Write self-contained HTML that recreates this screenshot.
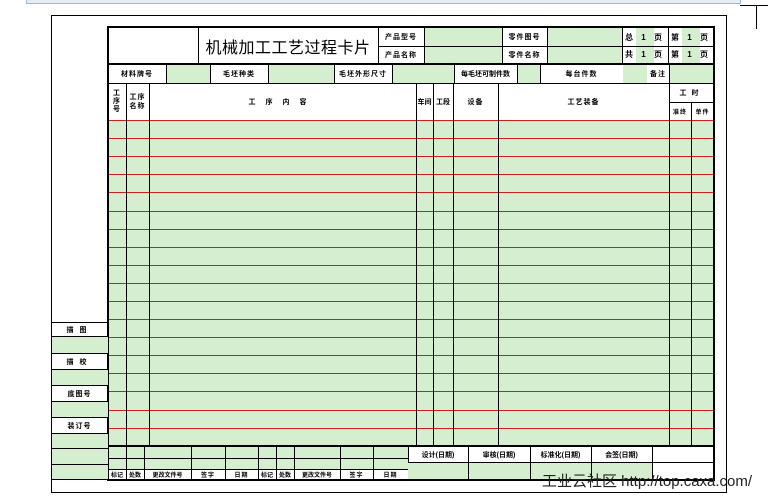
<!DOCTYPE html>
<html><head><meta charset="utf-8"><style>
*{margin:0;padding:0;box-sizing:border-box}
body{width:768px;height:496px;background:#fff;position:relative;overflow:hidden;font-family:"Liberation Sans","Noto Sans CJK SC",sans-serif;color:#000}
.a{position:absolute}
.g{background:#d6eed0}
.t{position:absolute;font-size:7px;font-weight:bold;display:flex;align-items:center;justify-content:center;white-space:nowrap;letter-spacing:1px}
.hl{position:absolute;height:1px;background:#000}
.vl{position:absolute;width:1px;background:#000}
.r{position:absolute;left:108px;width:606px;height:1px;background:#cc2020}
.lb{position:absolute;left:51px;width:57px;border:1px solid #000;background:#fff}
</style></head><body>
<div class="a" style="left:26px;top:0;width:715px;height:4px;background:#e4ecf6;border:1px solid #aab8cc;border-top:none"></div>
<div class="a" style="left:51px;top:15px;width:676px;height:478px;border:1px solid #000"></div>
<div class="a" style="left:740px;top:5px;width:28px;height:1px;background:#000"></div>
<div class="a" style="left:756px;top:5px;width:1px;height:24px;background:#000"></div>

<!-- header row 1-2 -->
<div class="a g" style="left:424px;top:28px;width:78px;height:35px"></div>
<div class="a g" style="left:547px;top:28px;width:75px;height:35px"></div>
<div class="a g" style="left:636px;top:28px;width:18px;height:35px"></div>
<div class="a g" style="left:682px;top:28px;width:18px;height:35px"></div>
<div class="vl" style="left:198px;top:27px;height:36px"></div>
<div class="vl" style="left:378px;top:27px;height:36px"></div>
<div class="vl" style="left:424px;top:27px;height:36px"></div>
<div class="vl" style="left:502px;top:27px;height:36px"></div>
<div class="vl" style="left:547px;top:27px;height:36px"></div>
<div class="vl" style="left:622px;top:27px;height:36px"></div>
<div class="vl" style="left:668px;top:27px;height:36px"></div>
<div class="hl" style="left:378px;top:46px;width:336px"></div>
<div class="a" style="left:108px;top:63px;width:606px;height:2px;background:#000"></div>
<div class="t" style="left:198px;top:28px;width:180px;height:35px;font-size:16px;font-weight:normal;letter-spacing:0.5px">机械加工工艺过程卡片</div>
<div class="t" style="left:378px;top:28px;width:46px;height:18px">产品型号</div>
<div class="t" style="left:378px;top:46px;width:46px;height:17px">产品名称</div>
<div class="t" style="left:502px;top:28px;width:45px;height:18px">零件图号</div>
<div class="t" style="left:502px;top:46px;width:45px;height:17px">零件名称</div>
<div class="t" style="left:622px;top:28px;width:46px;height:18px;font-size:8px;letter-spacing:3px">总 1 页</div>
<div class="t" style="left:622px;top:46px;width:46px;height:17px;font-size:8px;letter-spacing:3px">共 1 页</div>
<div class="t" style="left:668px;top:28px;width:46px;height:18px;font-size:8px;letter-spacing:3px">第 1 页</div>
<div class="t" style="left:668px;top:46px;width:46px;height:17px;font-size:8px;letter-spacing:3px">第 1 页</div>

<!-- row 3 -->
<div class="a g" style="left:166px;top:65px;width:44px;height:18px"></div>
<div class="a g" style="left:268px;top:65px;width:66px;height:18px"></div>
<div class="a g" style="left:392px;top:65px;width:62px;height:18px"></div>
<div class="a g" style="left:517px;top:65px;width:23px;height:18px"></div>
<div class="a g" style="left:623px;top:65px;width:24px;height:18px"></div>
<div class="a g" style="left:669px;top:65px;width:45px;height:18px"></div>
<div class="vl" style="left:166px;top:65px;height:18px"></div>
<div class="vl" style="left:210px;top:65px;height:18px"></div>
<div class="vl" style="left:268px;top:65px;height:18px"></div>
<div class="vl" style="left:334px;top:65px;height:18px"></div>
<div class="vl" style="left:392px;top:65px;height:18px"></div>
<div class="vl" style="left:454px;top:65px;height:18px"></div>
<div class="vl" style="left:517px;top:65px;height:18px"></div>
<div class="vl" style="left:540px;top:65px;height:18px"></div>
<div class="vl" style="left:669px;top:65px;height:18px"></div>
<div class="t" style="left:108px;top:65px;width:58px;height:18px">材料牌号</div>
<div class="t" style="left:210px;top:65px;width:58px;height:18px">毛坯种类</div>
<div class="t" style="left:334px;top:65px;width:58px;height:18px">毛坯外形尺寸</div>
<div class="t" style="left:454px;top:65px;width:63px;height:18px;letter-spacing:0">每毛坯可制件数</div>
<div class="t" style="left:540px;top:65px;width:83px;height:18px">每台件数</div>
<div class="t" style="left:647px;top:65px;width:22px;height:18px">备注</div>
<div class="hl" style="left:108px;top:83px;width:606px"></div>

<!-- header row 4 -->
<div class="t" style="left:108px;top:84px;width:18px;height:36px;white-space:normal;line-height:8px;text-align:center">工<br>序<br>号</div>
<div class="t" style="left:126px;top:84px;width:23px;height:36px;white-space:normal;line-height:9px;text-align:center">工序<br>名称</div>
<div class="t" style="left:149px;top:84px;width:267px;height:36px;letter-spacing:10px">工序内容</div>
<div class="t" style="left:416px;top:84px;width:17px;height:36px;letter-spacing:0">车间</div>
<div class="t" style="left:433px;top:84px;width:20px;height:36px;letter-spacing:0">工段</div>
<div class="t" style="left:453px;top:84px;width:45px;height:36px">设备</div>
<div class="t" style="left:498px;top:84px;width:171px;height:36px">工艺装备</div>
<div class="t" style="left:669px;top:84px;width:45px;height:18px;letter-spacing:5px">工时</div>
<div class="t" style="left:669px;top:102px;width:22px;height:18px;font-size:6px">准终</div>
<div class="t" style="left:691px;top:102px;width:23px;height:18px;font-size:6px">单件</div>
<div class="hl" style="left:669px;top:102px;width:45px"></div>

<!-- data area -->
<div class="a g" style="left:108px;top:120px;width:606px;height:326px"></div>
<div class="r" style="top:120px"></div><div class="r" style="top:138px"></div><div class="r" style="top:156px"></div>
<div class="r" style="top:174px"></div><div class="r" style="top:192px"></div><div class="r" style="top:211px"></div>
<div class="r" style="top:229px"></div><div class="r" style="top:247px"></div><div class="r" style="top:265px"></div>
<div class="r" style="top:283px"></div><div class="r" style="top:301px"></div><div class="r" style="top:319px"></div>
<div class="r" style="top:337px"></div><div class="r" style="top:355px"></div><div class="r" style="top:373px"></div>
<div class="r" style="top:391px"></div><div class="r" style="top:410px"></div><div class="r" style="top:428px"></div>
<div class="vl" style="left:126px;top:84px;height:362px"></div>
<div class="vl" style="left:149px;top:84px;height:362px"></div>
<div class="vl" style="left:416px;top:84px;height:362px"></div>
<div class="vl" style="left:433px;top:84px;height:362px"></div>
<div class="vl" style="left:453px;top:84px;height:362px"></div>
<div class="vl" style="left:498px;top:84px;height:362px"></div>
<div class="vl" style="left:669px;top:84px;height:362px"></div>
<div class="vl" style="left:691px;top:102px;height:344px"></div>
<div class="a" style="left:108px;top:445px;width:606px;height:2px;background:#000"></div>

<!-- bottom signature area -->
<div class="a g" style="left:108px;top:447px;width:300px;height:22px"></div>
<div class="hl" style="left:108px;top:458px;width:300px"></div>
<div class="hl" style="left:108px;top:469px;width:300px"></div>
<div class="vl" style="left:126px;top:447px;height:32px"></div>
<div class="vl" style="left:144px;top:447px;height:32px"></div>
<div class="vl" style="left:191px;top:447px;height:32px"></div>
<div class="vl" style="left:225px;top:447px;height:32px"></div>
<div class="vl" style="left:258px;top:447px;height:32px"></div>
<div class="vl" style="left:276px;top:447px;height:32px"></div>
<div class="vl" style="left:294px;top:447px;height:32px"></div>
<div class="vl" style="left:340px;top:447px;height:32px"></div>
<div class="vl" style="left:373px;top:447px;height:32px"></div>
<div class="vl" style="left:408px;top:447px;height:32px"></div>
<div class="t" style="left:108px;top:470px;width:18px;height:9px;font-size:6px;letter-spacing:0">标记</div>
<div class="t" style="left:126px;top:470px;width:18px;height:9px;font-size:6px;letter-spacing:0">处数</div>
<div class="t" style="left:144px;top:470px;width:47px;height:9px;font-size:6px;letter-spacing:0">更改文件号</div>
<div class="t" style="left:191px;top:470px;width:34px;height:9px;font-size:6px">签字</div>
<div class="t" style="left:225px;top:470px;width:33px;height:9px;font-size:6px">日期</div>
<div class="t" style="left:258px;top:470px;width:18px;height:9px;font-size:6px;letter-spacing:0">标记</div>
<div class="t" style="left:276px;top:470px;width:18px;height:9px;font-size:6px;letter-spacing:0">处数</div>
<div class="t" style="left:294px;top:470px;width:46px;height:9px;font-size:6px;letter-spacing:0">更改文件号</div>
<div class="t" style="left:340px;top:470px;width:33px;height:9px;font-size:6px">签字</div>
<div class="t" style="left:373px;top:470px;width:35px;height:9px;font-size:6px">日期</div>
<div class="a g" style="left:408px;top:463px;width:244px;height:16px"></div>
<div class="hl" style="left:408px;top:462px;width:306px"></div>
<div class="vl" style="left:468px;top:447px;height:32px"></div>
<div class="vl" style="left:530px;top:447px;height:32px"></div>
<div class="vl" style="left:591px;top:447px;height:32px"></div>
<div class="vl" style="left:652px;top:447px;height:32px"></div>
<div class="t" style="left:408px;top:447px;width:60px;height:15px;letter-spacing:0">设计(日期)</div>
<div class="t" style="left:468px;top:447px;width:62px;height:15px;letter-spacing:0">审核(日期)</div>
<div class="t" style="left:530px;top:447px;width:61px;height:15px;letter-spacing:0">标准化(日期)</div>
<div class="t" style="left:591px;top:447px;width:61px;height:15px;letter-spacing:0">会签(日期)</div>

<!-- card frame -->
<div class="a" style="left:107px;top:26px;width:608px;height:455px;border:2px solid #000"></div>

<!-- left side boxes -->
<div class="a g" style="left:51px;top:322px;width:57px;height:158px;border:1px solid #000;border-right:none"></div>
<div class="lb" style="top:322px;height:15px"></div>
<div class="t" style="left:51px;top:322px;width:57px;height:15px;letter-spacing:6px">描图</div>
<div class="lb" style="top:353px;height:17px"></div>
<div class="t" style="left:51px;top:353px;width:57px;height:17px;letter-spacing:6px">描校</div>
<div class="lb" style="top:385px;height:17px"></div>
<div class="t" style="left:51px;top:385px;width:57px;height:17px">底图号</div>
<div class="lb" style="top:417px;height:17px"></div>
<div class="t" style="left:51px;top:417px;width:57px;height:17px">装订号</div>
<div class="hl" style="left:51px;top:448px;width:57px"></div>
<div class="hl" style="left:51px;top:464px;width:57px"></div>

<!-- watermark -->
<div class="a" style="left:542px;top:470px;font-size:15px;color:#222;white-space:nowrap">工业云社区 http://top.caxa.com/</div>
</body></html>
